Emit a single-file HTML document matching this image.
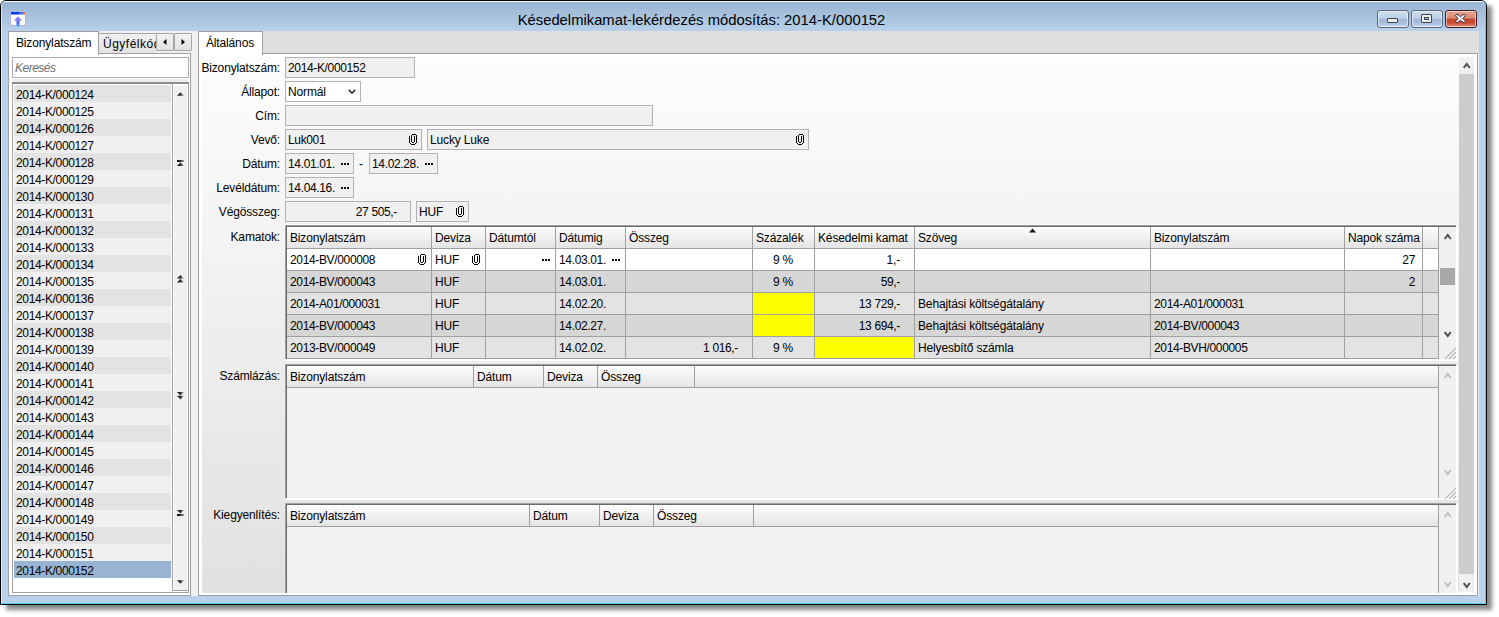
<!DOCTYPE html>
<html><head><meta charset="utf-8"><style>
html,body{margin:0;padding:0;}
body{width:1499px;height:617px;overflow:hidden;position:relative;background:#fff;font-family:"Liberation Sans", sans-serif;font-size:12px;color:#000;}
div{position:absolute;box-sizing:border-box;}
.t{white-space:nowrap;letter-spacing:-0.15px;}
</style></head><body>
<div style="left:6px;top:6px;width:1486px;height:604px;background:rgba(0,0,0,0.47);filter:blur(2px);"></div><div style="left:0;top:0;width:1487px;height:605px;border:1px solid #000;border-radius:6px 6px 0 0;background:#b9d1ea;overflow:hidden;"><div style="left:0;top:0;width:1485px;height:31px;background:linear-gradient(#98b3d1,#b9d1ea);"></div><div style="left:0;top:0;width:1485px;height:603px;border:1px solid rgba(255,255,255,0.6);border-top-color:#fff;border-right-color:#55d6f2;border-bottom-color:#55d6f2;border-radius:5px 5px 0 0;"></div></div><div class="t" style="left:26px;top:11px;width:1351px;text-align:center;font-size:14.8px;line-height:18px;color:#000;letter-spacing:0px;">Késedelmikamat-lekérdezés módosítás: 2014-K/000152</div><svg style="position:absolute;left:10px;top:11px" width="16" height="16" viewBox="0 0 16 16">
<defs><linearGradient id="ag" x1="0" y1="0" x2="0" y2="1"><stop offset="0" stop-color="#a8a8ff"/><stop offset="0.6" stop-color="#5a5af0"/><stop offset="1" stop-color="#50b0f8"/></linearGradient></defs>
<rect x="0.5" y="0.5" width="15" height="14" fill="#fafafa" stroke="#b0b8e8"/>
<rect x="1" y="1" width="8" height="2.5" fill="#0a3de0"/>
<rect x="9" y="1" width="4" height="2.5" fill="#3a70e8"/>
<rect x="13" y="1" width="2" height="2.5" fill="#e06a30"/>
<path d="M8 5 L12 9.5 L9.6 9.5 L9.6 15.5 L6.4 15.5 L6.4 9.5 L4 9.5 Z" fill="url(#ag)"/>
</svg><div style="left:1377px;top:10px;width:32px;height:18px;border:1px solid #5a687d;border-radius:3px;background:linear-gradient(#cddcee 0%,#bfd2ea 45%,#9fb7d4 50%,#a8c0dc 75%,#c5d8ef 100%);box-shadow:inset 0 0 0 1px rgba(255,255,255,0.55);"></div><div style="left:1411px;top:10px;width:32px;height:18px;border:1px solid #5a687d;border-radius:3px;background:linear-gradient(#cddcee 0%,#bfd2ea 45%,#9fb7d4 50%,#a8c0dc 75%,#c5d8ef 100%);box-shadow:inset 0 0 0 1px rgba(255,255,255,0.55);"></div><div style="left:1445px;top:10px;width:32px;height:18px;border:1px solid #4a1a22;border-radius:3px;background:linear-gradient(#e8a291 0%,#db8a76 45%,#c0442a 50%,#c84d33 75%,#e19886 100%);box-shadow:inset 0 0 0 1px rgba(255,255,255,0.55);"></div><div style="left:1387px;top:18px;width:11px;height:5px;background:#eee;border:1px solid #3d4655;border-radius:1px;"></div><div style="left:1421px;top:14px;width:11px;height:9px;background:#eee;border:1px solid #3d4655;border-radius:1px;"><div style="left:2px;top:2px;width:5px;height:3px;background:#9fb7d4;border:1px solid #3d4655;"></div></div><svg style="position:absolute;left:1454px;top:13px" width="13" height="11" viewBox="-1 -1 13 11">
<path d="M0.3 1.6 L2 0.2 L5.5 2.6 L9 0.2 L10.7 1.6 L7.8 4.5 L10.7 7.4 L9 8.8 L5.5 6.4 L2 8.8 L0.3 7.4 L3.2 4.5 Z" fill="#f4f4f4" stroke="#3a3040" stroke-width="1" stroke-linejoin="round"/>
</svg><div style="left:8px;top:31px;width:1471px;height:565px;background:#f0f0f0;"></div><div style="left:8px;top:53px;width:183px;height:543px;background:#fff;border:1px solid #a0a0a0;"></div><div style="left:98px;top:33px;width:72px;height:20px;background:linear-gradient(#f0f0f0,#e3e3e3);border:1px solid #a5a5a5;border-bottom:none;"></div><div style="left:156px;top:51px;width:35px;height:2px;background:#f0f0f0;"></div><div class="t" style="left:103px;top:34px;height:21px;line-height:21px;width:53px;overflow:hidden;letter-spacing:0.5px;">Ügyfélkód</div><div style="left:8px;top:31px;width:91px;height:24px;background:#fff;border:1px solid #a0a0a0;border-bottom:none;"></div><div class="t" style="left:16px;top:32px;height:22px;line-height:22px;">Bizonylatszám</div><div style="left:156px;top:33px;width:18px;height:18px;background:linear-gradient(#f3f3f3,#e2e2e2);border:1px solid #a8a8a8;border-radius:1px;"></div><div style="left:174px;top:33px;width:18px;height:18px;background:linear-gradient(#f3f3f3,#e2e2e2);border:1px solid #a8a8a8;border-radius:1px;"></div><svg style="position:absolute;left:162px;top:38px" width="6" height="8"><path d="M4.5 1 L4.5 7 L1 4 Z" fill="#000"/></svg><svg style="position:absolute;left:181px;top:38px" width="6" height="8"><path d="M0.5 1 L0.5 7 L4 4 Z" fill="#000"/></svg><div style="left:12px;top:57px;width:177px;height:21px;background:#fff;border:1px solid #a9adb4;"></div><div class="t" style="left:15px;top:58px;height:21px;line-height:21px;font-style:italic;color:#707070;letter-spacing:-0.5px;">Keresés</div><div style="left:13px;top:79px;width:175px;height:3px;background:#ececec;"></div><div style="left:12px;top:82px;width:177px;height:511px;background:#fff;border:1px solid #a0a0a0;border-top:2px solid #8c8c8c;"></div><div style="left:14px;top:85px;width:157px;height:17px;background:#e3e3e3;"></div><div class="t" style="left:16px;top:87px;height:17px;line-height:17px;letter-spacing:-0.35px;">2014-K/000124</div><div style="left:14px;top:102px;width:157px;height:17px;background:#f0f0f0;"></div><div class="t" style="left:16px;top:104px;height:17px;line-height:17px;letter-spacing:-0.35px;">2014-K/000125</div><div style="left:14px;top:119px;width:157px;height:17px;background:#e3e3e3;"></div><div class="t" style="left:16px;top:121px;height:17px;line-height:17px;letter-spacing:-0.35px;">2014-K/000126</div><div style="left:14px;top:136px;width:157px;height:17px;background:#f0f0f0;"></div><div class="t" style="left:16px;top:138px;height:17px;line-height:17px;letter-spacing:-0.35px;">2014-K/000127</div><div style="left:14px;top:153px;width:157px;height:17px;background:#e3e3e3;"></div><div class="t" style="left:16px;top:155px;height:17px;line-height:17px;letter-spacing:-0.35px;">2014-K/000128</div><div style="left:14px;top:170px;width:157px;height:17px;background:#f0f0f0;"></div><div class="t" style="left:16px;top:172px;height:17px;line-height:17px;letter-spacing:-0.35px;">2014-K/000129</div><div style="left:14px;top:187px;width:157px;height:17px;background:#e3e3e3;"></div><div class="t" style="left:16px;top:189px;height:17px;line-height:17px;letter-spacing:-0.35px;">2014-K/000130</div><div style="left:14px;top:204px;width:157px;height:17px;background:#f0f0f0;"></div><div class="t" style="left:16px;top:206px;height:17px;line-height:17px;letter-spacing:-0.35px;">2014-K/000131</div><div style="left:14px;top:221px;width:157px;height:17px;background:#e3e3e3;"></div><div class="t" style="left:16px;top:223px;height:17px;line-height:17px;letter-spacing:-0.35px;">2014-K/000132</div><div style="left:14px;top:238px;width:157px;height:17px;background:#f0f0f0;"></div><div class="t" style="left:16px;top:240px;height:17px;line-height:17px;letter-spacing:-0.35px;">2014-K/000133</div><div style="left:14px;top:255px;width:157px;height:17px;background:#e3e3e3;"></div><div class="t" style="left:16px;top:257px;height:17px;line-height:17px;letter-spacing:-0.35px;">2014-K/000134</div><div style="left:14px;top:272px;width:157px;height:17px;background:#f0f0f0;"></div><div class="t" style="left:16px;top:274px;height:17px;line-height:17px;letter-spacing:-0.35px;">2014-K/000135</div><div style="left:14px;top:289px;width:157px;height:17px;background:#e3e3e3;"></div><div class="t" style="left:16px;top:291px;height:17px;line-height:17px;letter-spacing:-0.35px;">2014-K/000136</div><div style="left:14px;top:306px;width:157px;height:17px;background:#f0f0f0;"></div><div class="t" style="left:16px;top:308px;height:17px;line-height:17px;letter-spacing:-0.35px;">2014-K/000137</div><div style="left:14px;top:323px;width:157px;height:17px;background:#e3e3e3;"></div><div class="t" style="left:16px;top:325px;height:17px;line-height:17px;letter-spacing:-0.35px;">2014-K/000138</div><div style="left:14px;top:340px;width:157px;height:17px;background:#f0f0f0;"></div><div class="t" style="left:16px;top:342px;height:17px;line-height:17px;letter-spacing:-0.35px;">2014-K/000139</div><div style="left:14px;top:357px;width:157px;height:17px;background:#e3e3e3;"></div><div class="t" style="left:16px;top:359px;height:17px;line-height:17px;letter-spacing:-0.35px;">2014-K/000140</div><div style="left:14px;top:374px;width:157px;height:17px;background:#f0f0f0;"></div><div class="t" style="left:16px;top:376px;height:17px;line-height:17px;letter-spacing:-0.35px;">2014-K/000141</div><div style="left:14px;top:391px;width:157px;height:17px;background:#e3e3e3;"></div><div class="t" style="left:16px;top:393px;height:17px;line-height:17px;letter-spacing:-0.35px;">2014-K/000142</div><div style="left:14px;top:408px;width:157px;height:17px;background:#f0f0f0;"></div><div class="t" style="left:16px;top:410px;height:17px;line-height:17px;letter-spacing:-0.35px;">2014-K/000143</div><div style="left:14px;top:425px;width:157px;height:17px;background:#e3e3e3;"></div><div class="t" style="left:16px;top:427px;height:17px;line-height:17px;letter-spacing:-0.35px;">2014-K/000144</div><div style="left:14px;top:442px;width:157px;height:17px;background:#f0f0f0;"></div><div class="t" style="left:16px;top:444px;height:17px;line-height:17px;letter-spacing:-0.35px;">2014-K/000145</div><div style="left:14px;top:459px;width:157px;height:17px;background:#e3e3e3;"></div><div class="t" style="left:16px;top:461px;height:17px;line-height:17px;letter-spacing:-0.35px;">2014-K/000146</div><div style="left:14px;top:476px;width:157px;height:17px;background:#f0f0f0;"></div><div class="t" style="left:16px;top:478px;height:17px;line-height:17px;letter-spacing:-0.35px;">2014-K/000147</div><div style="left:14px;top:493px;width:157px;height:17px;background:#e3e3e3;"></div><div class="t" style="left:16px;top:495px;height:17px;line-height:17px;letter-spacing:-0.35px;">2014-K/000148</div><div style="left:14px;top:510px;width:157px;height:17px;background:#f0f0f0;"></div><div class="t" style="left:16px;top:512px;height:17px;line-height:17px;letter-spacing:-0.35px;">2014-K/000149</div><div style="left:14px;top:527px;width:157px;height:17px;background:#e3e3e3;"></div><div class="t" style="left:16px;top:529px;height:17px;line-height:17px;letter-spacing:-0.35px;">2014-K/000150</div><div style="left:14px;top:544px;width:157px;height:17px;background:#f0f0f0;"></div><div class="t" style="left:16px;top:546px;height:17px;line-height:17px;letter-spacing:-0.35px;">2014-K/000151</div><div style="left:14px;top:561px;width:157px;height:17px;background:#99b4d2;"></div><div class="t" style="left:16px;top:563px;height:17px;line-height:17px;letter-spacing:-0.35px;">2014-K/000152</div><div style="left:172px;top:84px;width:1px;height:507px;background:#a0a0a0;"></div><div style="left:173px;top:84px;width:15px;height:507px;background:#fff;border-bottom:1px solid #a0a0a0;"></div><div style="left:174px;top:86px;width:13px;height:504px;background:#f0f0f0;"></div><svg style="position:absolute;left:0;top:0" width="1" height="1"><defs><linearGradient id="sg" x1="0" y1="0" x2="1" y2="0"><stop offset="0" stop-color="#000"/><stop offset="0.5" stop-color="#333"/><stop offset="1" stop-color="#aaa"/></linearGradient></defs></svg><svg style="position:absolute;left:177px;top:92px" width="7" height="10" viewBox="0 0 7 10"><path d="M0 3.8000000000000003 L3.5 0.2 L7 3.8000000000000003 Z" fill="url(#sg)"/></svg><svg style="position:absolute;left:177px;top:160px" width="7" height="10" viewBox="0 0 7 10"><rect x="0" y="0" width="7" height="2" fill="url(#sg)"/><path d="M0 5.9 L3.5 2.3 L7 5.9 Z" fill="url(#sg)"/></svg><svg style="position:absolute;left:177px;top:275px" width="7" height="10" viewBox="0 0 7 10"><path d="M0 3.6 L3.5 0 L7 3.6 Z" fill="url(#sg)"/><path d="M0 7.4 L3.5 3.8 L7 7.4 Z" fill="url(#sg)"/></svg><svg style="position:absolute;left:177px;top:392px" width="7" height="10" viewBox="0 0 7 10"><path d="M0 0 L3.5 3.6 L7 0 Z" fill="url(#sg)"/><path d="M0 3.8 L3.5 7.4 L7 3.8 Z" fill="url(#sg)"/></svg><svg style="position:absolute;left:177px;top:510px" width="7" height="10" viewBox="0 0 7 10"><path d="M0 0 L3.5 3.6 L7 0 Z" fill="url(#sg)"/><rect x="0" y="4" width="7" height="2" fill="url(#sg)"/></svg><svg style="position:absolute;left:177px;top:580px" width="7" height="10" viewBox="0 0 7 10"><path d="M0 0.2 L3.5 3.8000000000000003 L7 0.2 Z" fill="url(#sg)"/></svg><div style="left:199px;top:31px;width:1280px;height:23px;background:#dfdfdf;"></div><div style="left:198px;top:53px;width:1280px;height:543px;background:#fff;border:1px solid #a0a0a0;"></div><div style="left:198px;top:31px;width:65px;height:24px;background:#fff;border:1px solid #a0a0a0;border-bottom:none;"></div><div class="t" style="left:206px;top:32px;height:22px;line-height:22px;">Általános</div><div style="left:202px;top:57px;width:1257px;height:536px;background:linear-gradient(#fdfdfd,#e1e1e1);"></div><div class="t" style="left:180px;top:58px;width:100px;height:21px;line-height:21px;text-align:right;">Bizonylatszám:</div><div class="t" style="left:180px;top:82px;width:100px;height:21px;line-height:21px;text-align:right;">Állapot:</div><div class="t" style="left:180px;top:106px;width:100px;height:21px;line-height:21px;text-align:right;">Cím:</div><div class="t" style="left:180px;top:130px;width:100px;height:21px;line-height:21px;text-align:right;">Vevő:</div><div class="t" style="left:180px;top:154px;width:100px;height:21px;line-height:21px;text-align:right;">Dátum:</div><div class="t" style="left:180px;top:178px;width:100px;height:21px;line-height:21px;text-align:right;">Levéldátum:</div><div class="t" style="left:180px;top:202px;width:100px;height:21px;line-height:21px;text-align:right;">Végösszeg:</div><div class="t" style="left:180px;top:227px;width:100px;height:21px;line-height:21px;text-align:right;">Kamatok:</div><div class="t" style="left:180px;top:366px;width:100px;height:21px;line-height:21px;text-align:right;">Számlázás:</div><div class="t" style="left:180px;top:505px;width:100px;height:21px;line-height:21px;text-align:right;">Kiegyenlítés:</div><div style="left:285px;top:57px;width:130px;height:21px;background:#f0f0f0;border:1px solid #b2b2b6;"></div><div class="t" style="left:288px;top:58px;height:21px;line-height:21px;letter-spacing:-0.35px;">2014-K/000152</div><div style="left:285px;top:81px;width:76px;height:21px;background:#fff;border:1px solid #b2b2b6;"></div><div class="t" style="left:288px;top:82px;height:21px;line-height:21px;">Normál</div><svg style="position:absolute;left:348px;top:89px" width="8" height="6"><path d="M0.8 0.8 L4 4.2 L7.2 0.8" fill="none" stroke="#222" stroke-width="1.6"/></svg><div style="left:285px;top:105px;width:368px;height:21px;background:#f0f0f0;border:1px solid #b2b2b6;"></div><div style="left:285px;top:129px;width:137px;height:21px;background:#f0f0f0;border:1px solid #b2b2b6;"></div><div class="t" style="left:288px;top:130px;height:21px;line-height:21px;letter-spacing:-0.35px;">Luk001</div><div style="left:409px;top:134px;width:8px;height:11px;"><svg width="8" height="11" viewBox="0 0 8 11" shape-rendering="crispEdges" fill="#000"><rect x="0" y="2" width="1" height="7"/><rect x="1" y="9" width="1" height="1"/><rect x="2" y="10" width="4" height="1"/><rect x="6" y="9" width="1" height="1"/><rect x="7" y="1" width="1" height="8"/><rect x="3" y="0" width="4" height="1"/><rect x="2" y="1" width="1" height="7"/><rect x="5" y="2" width="1" height="6"/><rect x="3" y="8" width="2" height="1"/></svg></div><div style="left:427px;top:129px;width:382px;height:21px;background:#f0f0f0;border:1px solid #b2b2b6;"></div><div class="t" style="left:430px;top:130px;height:21px;line-height:21px;">Lucky Luke</div><div style="left:796px;top:134px;width:8px;height:11px;"><svg width="8" height="11" viewBox="0 0 8 11" shape-rendering="crispEdges" fill="#000"><rect x="0" y="2" width="1" height="7"/><rect x="1" y="9" width="1" height="1"/><rect x="2" y="10" width="4" height="1"/><rect x="6" y="9" width="1" height="1"/><rect x="7" y="1" width="1" height="8"/><rect x="3" y="0" width="4" height="1"/><rect x="2" y="1" width="1" height="7"/><rect x="5" y="2" width="1" height="6"/><rect x="3" y="8" width="2" height="1"/></svg></div><div style="left:285px;top:153px;width:69px;height:21px;background:#f0f0f0;border:1px solid #b2b2b6;"></div><div class="t" style="left:288px;top:154px;height:21px;line-height:21px;letter-spacing:-0.35px;">14.01.01.</div><div style="left:341px;top:162px;width:9px;height:3px;line-height:0;"><svg width="9" height="3"><rect x="0" y="0" width="2" height="2" fill="#111"/><rect x="3" y="0" width="2" height="2" fill="#111"/><rect x="6" y="0" width="2" height="2" fill="#111"/></svg></div><div class="t" style="left:359px;top:154px;height:21px;line-height:21px;">-</div><div style="left:369px;top:153px;width:69px;height:21px;background:#f0f0f0;border:1px solid #b2b2b6;"></div><div class="t" style="left:372px;top:154px;height:21px;line-height:21px;letter-spacing:-0.35px;">14.02.28.</div><div style="left:425px;top:162px;width:9px;height:3px;line-height:0;"><svg width="9" height="3"><rect x="0" y="0" width="2" height="2" fill="#111"/><rect x="3" y="0" width="2" height="2" fill="#111"/><rect x="6" y="0" width="2" height="2" fill="#111"/></svg></div><div style="left:285px;top:177px;width:69px;height:21px;background:#f0f0f0;border:1px solid #b2b2b6;"></div><div class="t" style="left:288px;top:178px;height:21px;line-height:21px;letter-spacing:-0.35px;">14.04.16.</div><div style="left:341px;top:186px;width:9px;height:3px;line-height:0;"><svg width="9" height="3"><rect x="0" y="0" width="2" height="2" fill="#111"/><rect x="3" y="0" width="2" height="2" fill="#111"/><rect x="6" y="0" width="2" height="2" fill="#111"/></svg></div><div style="left:285px;top:201px;width:126px;height:21px;background:#f0f0f0;border:1px solid #b2b2b6;"></div><div class="t" style="left:285px;top:202px;width:112px;height:21px;line-height:21px;text-align:right;letter-spacing:-0.35px;">27 505,-</div><div style="left:416px;top:201px;width:53px;height:21px;background:#f0f0f0;border:1px solid #b2b2b6;"></div><div class="t" style="left:419px;top:202px;height:21px;line-height:21px;">HUF</div><div style="left:456px;top:206px;width:8px;height:11px;"><svg width="8" height="11" viewBox="0 0 8 11" shape-rendering="crispEdges" fill="#000"><rect x="0" y="2" width="1" height="7"/><rect x="1" y="9" width="1" height="1"/><rect x="2" y="10" width="4" height="1"/><rect x="6" y="9" width="1" height="1"/><rect x="7" y="1" width="1" height="8"/><rect x="3" y="0" width="4" height="1"/><rect x="2" y="1" width="1" height="7"/><rect x="5" y="2" width="1" height="6"/><rect x="3" y="8" width="2" height="1"/></svg></div><div style="left:285px;top:225px;width:1171px;height:136px;background:#fff;"></div><div style="left:285px;top:225px;width:1171px;height:1px;background:#a0a0a0;"></div><div style="left:286px;top:226px;width:1170px;height:1px;background:#6a6a6a;"></div><div style="left:285px;top:225px;width:1px;height:136px;background:#a0a0a0;"></div><div style="left:286px;top:226px;width:1px;height:135px;background:#6a6a6a;"></div><div style="left:284px;top:224px;width:1173px;height:1px;background:#fafafa;"></div><div style="left:287px;top:227px;width:1152px;height:21px;background:linear-gradient(#fdfdfd,#e4e4e4);"></div><div style="left:287px;top:249px;width:1152px;height:21px;background:#ffffff;"></div><div style="left:287px;top:271px;width:1152px;height:21px;background:#d6d6d6;"></div><div style="left:287px;top:293px;width:1152px;height:21px;background:#e3e3e3;"></div><div style="left:287px;top:315px;width:1152px;height:21px;background:#d6d6d6;"></div><div style="left:287px;top:337px;width:1152px;height:21px;background:#e3e3e3;"></div><div style="left:753px;top:293px;width:61px;height:21px;background:#ffff00;"></div><div style="left:753px;top:315px;width:61px;height:21px;background:#ffff00;"></div><div style="left:815px;top:337px;width:99px;height:21px;background:#ffff00;"></div><div style="left:287px;top:248px;width:1152px;height:1px;background:#a0a0a0;"></div><div style="left:287px;top:270px;width:1152px;height:1px;background:#a0a0a0;"></div><div style="left:287px;top:292px;width:1152px;height:1px;background:#a0a0a0;"></div><div style="left:287px;top:314px;width:1152px;height:1px;background:#a0a0a0;"></div><div style="left:287px;top:336px;width:1152px;height:1px;background:#a0a0a0;"></div><div style="left:287px;top:358px;width:1152px;height:1px;background:#a0a0a0;"></div><div style="left:431px;top:227px;width:1px;height:132px;background:#a0a0a0;"></div><div style="left:485px;top:227px;width:1px;height:132px;background:#a0a0a0;"></div><div style="left:555px;top:227px;width:1px;height:132px;background:#a0a0a0;"></div><div style="left:625px;top:227px;width:1px;height:132px;background:#a0a0a0;"></div><div style="left:752px;top:227px;width:1px;height:132px;background:#a0a0a0;"></div><div style="left:814px;top:227px;width:1px;height:132px;background:#a0a0a0;"></div><div style="left:914px;top:227px;width:1px;height:132px;background:#a0a0a0;"></div><div style="left:1150px;top:227px;width:1px;height:132px;background:#a0a0a0;"></div><div style="left:1344px;top:227px;width:1px;height:132px;background:#a0a0a0;"></div><div style="left:1422px;top:227px;width:1px;height:132px;background:#a0a0a0;"></div><div style="left:1438px;top:227px;width:1px;height:132px;background:#a0a0a0;"></div><div style="left:1439px;top:227px;width:17px;height:132px;background:#f0f0f0;"></div><div style="left:285px;top:359px;width:1172px;height:2px;background:#fff;"></div><div style="left:1456px;top:227px;width:2px;height:134px;background:#fff;"></div><div class="t" style="left:290px;top:228px;height:21px;line-height:21px;">Bizonylatszám</div><div class="t" style="left:435px;top:228px;height:21px;line-height:21px;">Deviza</div><div class="t" style="left:489px;top:228px;height:21px;line-height:21px;">Dátumtól</div><div class="t" style="left:559px;top:228px;height:21px;line-height:21px;">Dátumig</div><div class="t" style="left:629px;top:228px;height:21px;line-height:21px;">Összeg</div><div class="t" style="left:756px;top:228px;height:21px;line-height:21px;">Százalék</div><div class="t" style="left:818px;top:228px;height:21px;line-height:21px;">Késedelmi kamat</div><div class="t" style="left:918px;top:228px;height:21px;line-height:21px;">Szöveg</div><div class="t" style="left:1154px;top:228px;height:21px;line-height:21px;">Bizonylatszám</div><div class="t" style="left:1348px;top:228px;height:21px;line-height:21px;">Napok száma</div><svg style="position:absolute;left:1029px;top:228px" width="8" height="5"><path d="M0 4.5 L3.5 0.5 L7 4.5 Z" fill="#111"/></svg><div class="t" style="left:290px;top:250px;height:21px;line-height:21px;letter-spacing:-0.35px;">2014-BV/000008</div><div class="t" style="left:435px;top:250px;height:21px;line-height:21px;">HUF</div><div class="t" style="left:559px;top:250px;height:21px;line-height:21px;letter-spacing:-0.35px;">14.03.01.</div><div class="t" style="left:290px;top:272px;height:21px;line-height:21px;letter-spacing:-0.35px;">2014-BV/000043</div><div class="t" style="left:435px;top:272px;height:21px;line-height:21px;">HUF</div><div class="t" style="left:559px;top:272px;height:21px;line-height:21px;letter-spacing:-0.35px;">14.03.01.</div><div class="t" style="left:290px;top:294px;height:21px;line-height:21px;letter-spacing:-0.35px;">2014-A01/000031</div><div class="t" style="left:435px;top:294px;height:21px;line-height:21px;">HUF</div><div class="t" style="left:559px;top:294px;height:21px;line-height:21px;letter-spacing:-0.35px;">14.02.20.</div><div class="t" style="left:290px;top:316px;height:21px;line-height:21px;letter-spacing:-0.35px;">2014-BV/000043</div><div class="t" style="left:435px;top:316px;height:21px;line-height:21px;">HUF</div><div class="t" style="left:559px;top:316px;height:21px;line-height:21px;letter-spacing:-0.35px;">14.02.27.</div><div class="t" style="left:290px;top:338px;height:21px;line-height:21px;letter-spacing:-0.35px;">2013-BV/000049</div><div class="t" style="left:435px;top:338px;height:21px;line-height:21px;">HUF</div><div class="t" style="left:559px;top:338px;height:21px;line-height:21px;letter-spacing:-0.35px;">14.02.02.</div><div style="left:418px;top:254px;width:8px;height:11px;"><svg width="8" height="11" viewBox="0 0 8 11" shape-rendering="crispEdges" fill="#000"><rect x="0" y="2" width="1" height="7"/><rect x="1" y="9" width="1" height="1"/><rect x="2" y="10" width="4" height="1"/><rect x="6" y="9" width="1" height="1"/><rect x="7" y="1" width="1" height="8"/><rect x="3" y="0" width="4" height="1"/><rect x="2" y="1" width="1" height="7"/><rect x="5" y="2" width="1" height="6"/><rect x="3" y="8" width="2" height="1"/></svg></div><div style="left:472px;top:254px;width:8px;height:11px;"><svg width="8" height="11" viewBox="0 0 8 11" shape-rendering="crispEdges" fill="#000"><rect x="0" y="2" width="1" height="7"/><rect x="1" y="9" width="1" height="1"/><rect x="2" y="10" width="4" height="1"/><rect x="6" y="9" width="1" height="1"/><rect x="7" y="1" width="1" height="8"/><rect x="3" y="0" width="4" height="1"/><rect x="2" y="1" width="1" height="7"/><rect x="5" y="2" width="1" height="6"/><rect x="3" y="8" width="2" height="1"/></svg></div><div style="left:542px;top:258px;width:9px;height:3px;line-height:0;"><svg width="9" height="3"><rect x="0" y="0" width="2" height="2" fill="#111"/><rect x="3" y="0" width="2" height="2" fill="#111"/><rect x="6" y="0" width="2" height="2" fill="#111"/></svg></div><div style="left:612px;top:258px;width:9px;height:3px;line-height:0;"><svg width="9" height="3"><rect x="0" y="0" width="2" height="2" fill="#111"/><rect x="3" y="0" width="2" height="2" fill="#111"/><rect x="6" y="0" width="2" height="2" fill="#111"/></svg></div><div class="t" style="left:538px;top:338px;width:200px;height:21px;line-height:21px;text-align:right;letter-spacing:-0.35px;">1 016,-</div><div class="t" style="left:683px;top:250px;width:200px;height:21px;line-height:21px;text-align:center;">9 %</div><div class="t" style="left:683px;top:272px;width:200px;height:21px;line-height:21px;text-align:center;">9 %</div><div class="t" style="left:683px;top:338px;width:200px;height:21px;line-height:21px;text-align:center;">9 %</div><div class="t" style="left:700px;top:250px;width:200px;height:21px;line-height:21px;text-align:right;">1,-</div><div class="t" style="left:700px;top:272px;width:200px;height:21px;line-height:21px;text-align:right;letter-spacing:-0.35px;">59,-</div><div class="t" style="left:700px;top:294px;width:200px;height:21px;line-height:21px;text-align:right;letter-spacing:-0.35px;">13 729,-</div><div class="t" style="left:700px;top:316px;width:200px;height:21px;line-height:21px;text-align:right;letter-spacing:-0.35px;">13 694,-</div><div class="t" style="left:918px;top:294px;height:21px;line-height:21px;">Behajtási költségátalány</div><div class="t" style="left:918px;top:316px;height:21px;line-height:21px;">Behajtási költségátalány</div><div class="t" style="left:918px;top:338px;height:21px;line-height:21px;">Helyesbítő számla</div><div class="t" style="left:1154px;top:294px;height:21px;line-height:21px;letter-spacing:-0.35px;">2014-A01/000031</div><div class="t" style="left:1154px;top:316px;height:21px;line-height:21px;letter-spacing:-0.35px;">2014-BV/000043</div><div class="t" style="left:1154px;top:338px;height:21px;line-height:21px;letter-spacing:-0.35px;">2014-BVH/000005</div><div class="t" style="left:1215px;top:250px;width:200px;height:21px;line-height:21px;text-align:right;letter-spacing:-0.35px;">27</div><div class="t" style="left:1215px;top:272px;width:200px;height:21px;line-height:21px;text-align:right;letter-spacing:-0.35px;">2</div><svg style="position:absolute;left:1444px;top:233px" width="8" height="7"><path d="M0.7 6 L3.75 2 L6.8 6" fill="none" stroke="#505050" stroke-width="2"/></svg><svg style="position:absolute;left:1444px;top:331px" width="8" height="7"><path d="M0.7 1 L3.75 5 L6.8 1" fill="none" stroke="#505050" stroke-width="2"/></svg><div style="left:1440px;top:268px;width:15px;height:17px;background:#a8a8a8;"></div><svg style="position:absolute;left:1444px;top:348px" width="13" height="12"><path d="M2 12 L13 1 M6 12 L13 5 M10 12 L13 9" stroke="#fff" stroke-width="1.2"/><path d="M1 11 L12 0 M5 11 L12 4 M9 11 L12 8" stroke="#b0b0b0" stroke-width="1.1"/></svg><div style="left:285px;top:364px;width:1173px;height:136px;background:#f2f2f2;"></div><div style="left:285px;top:364px;width:1171px;height:1px;background:#a0a0a0;"></div><div style="left:286px;top:365px;width:1170px;height:1px;background:#6a6a6a;"></div><div style="left:285px;top:364px;width:1px;height:136px;background:#a0a0a0;"></div><div style="left:286px;top:365px;width:1px;height:135px;background:#6a6a6a;"></div><div style="left:287px;top:366px;width:1152px;height:21px;background:linear-gradient(#fdfdfd,#e4e4e4);"></div><div style="left:287px;top:387px;width:1152px;height:1px;background:#a0a0a0;"></div><div style="left:473px;top:366px;width:1px;height:21px;background:#a0a0a0;"></div><div style="left:543px;top:366px;width:1px;height:21px;background:#a0a0a0;"></div><div style="left:597px;top:366px;width:1px;height:21px;background:#a0a0a0;"></div><div style="left:694px;top:366px;width:1px;height:21px;background:#a0a0a0;"></div><div style="left:1438px;top:366px;width:1px;height:132px;background:#a0a0a0;"></div><div style="left:1439px;top:366px;width:17px;height:132px;background:#f0f0f0;"></div><div style="left:285px;top:498px;width:1172px;height:2px;background:#fff;"></div><div style="left:1456px;top:366px;width:2px;height:134px;background:#fff;"></div><div class="t" style="left:290px;top:367px;height:21px;line-height:21px;">Bizonylatszám</div><div class="t" style="left:477px;top:367px;height:21px;line-height:21px;">Dátum</div><div class="t" style="left:547px;top:367px;height:21px;line-height:21px;">Deviza</div><div class="t" style="left:601px;top:367px;height:21px;line-height:21px;">Összeg</div><svg style="position:absolute;left:1444px;top:372px" width="8" height="7"><path d="M0.7 6 L3.75 2 L6.8 6" fill="none" stroke="#c2c2c2" stroke-width="2"/></svg><svg style="position:absolute;left:1444px;top:469px" width="8" height="7"><path d="M0.7 1 L3.75 5 L6.8 1" fill="none" stroke="#c2c2c2" stroke-width="2"/></svg><svg style="position:absolute;left:1444px;top:488px" width="13" height="12"><path d="M2 12 L13 1 M6 12 L13 5 M10 12 L13 9" stroke="#fff" stroke-width="1.2"/><path d="M1 11 L12 0 M5 11 L12 4 M9 11 L12 8" stroke="#b8b8b8" stroke-width="1.1"/></svg><div style="left:285px;top:503px;width:1173px;height:92px;background:#f2f2f2;"></div><div style="left:285px;top:503px;width:1171px;height:1px;background:#a0a0a0;"></div><div style="left:286px;top:504px;width:1170px;height:1px;background:#6a6a6a;"></div><div style="left:285px;top:503px;width:1px;height:92px;background:#a0a0a0;"></div><div style="left:286px;top:504px;width:1px;height:91px;background:#6a6a6a;"></div><div style="left:287px;top:505px;width:1152px;height:21px;background:linear-gradient(#fdfdfd,#e4e4e4);"></div><div style="left:287px;top:526px;width:1152px;height:1px;background:#a0a0a0;"></div><div style="left:529px;top:505px;width:1px;height:21px;background:#a0a0a0;"></div><div style="left:599px;top:505px;width:1px;height:21px;background:#a0a0a0;"></div><div style="left:653px;top:505px;width:1px;height:21px;background:#a0a0a0;"></div><div style="left:753px;top:505px;width:1px;height:21px;background:#a0a0a0;"></div><div style="left:1438px;top:505px;width:1px;height:88px;background:#a0a0a0;"></div><div style="left:1439px;top:505px;width:17px;height:88px;background:#f0f0f0;"></div><div style="left:285px;top:593px;width:1172px;height:2px;background:#fff;"></div><div style="left:1456px;top:505px;width:2px;height:90px;background:#fff;"></div><div class="t" style="left:290px;top:506px;height:21px;line-height:21px;">Bizonylatszám</div><div class="t" style="left:533px;top:506px;height:21px;line-height:21px;">Dátum</div><div class="t" style="left:603px;top:506px;height:21px;line-height:21px;">Deviza</div><div class="t" style="left:657px;top:506px;height:21px;line-height:21px;">Összeg</div><svg style="position:absolute;left:1444px;top:511px" width="8" height="7"><path d="M0.7 6 L3.75 2 L6.8 6" fill="none" stroke="#c2c2c2" stroke-width="2"/></svg><svg style="position:absolute;left:1444px;top:581px" width="8" height="7"><path d="M0.7 1 L3.75 5 L6.8 1" fill="none" stroke="#c2c2c2" stroke-width="2"/></svg><div style="left:1459px;top:57px;width:15px;height:17px;background:#f0f0f0;"></div><div style="left:1459px;top:74px;width:15px;height:500px;background:#cdcdcd;"></div><div style="left:1459px;top:574px;width:15px;height:18px;background:#f0f0f0;"></div><svg style="position:absolute;left:1463px;top:62px" width="8" height="7"><path d="M0.7 6 L3.75 2 L6.8 6" fill="none" stroke="#505050" stroke-width="2"/></svg><svg style="position:absolute;left:1463px;top:582px" width="8" height="7"><path d="M0.7 1 L3.75 5 L6.8 1" fill="none" stroke="#505050" stroke-width="2"/></svg></body></html>
